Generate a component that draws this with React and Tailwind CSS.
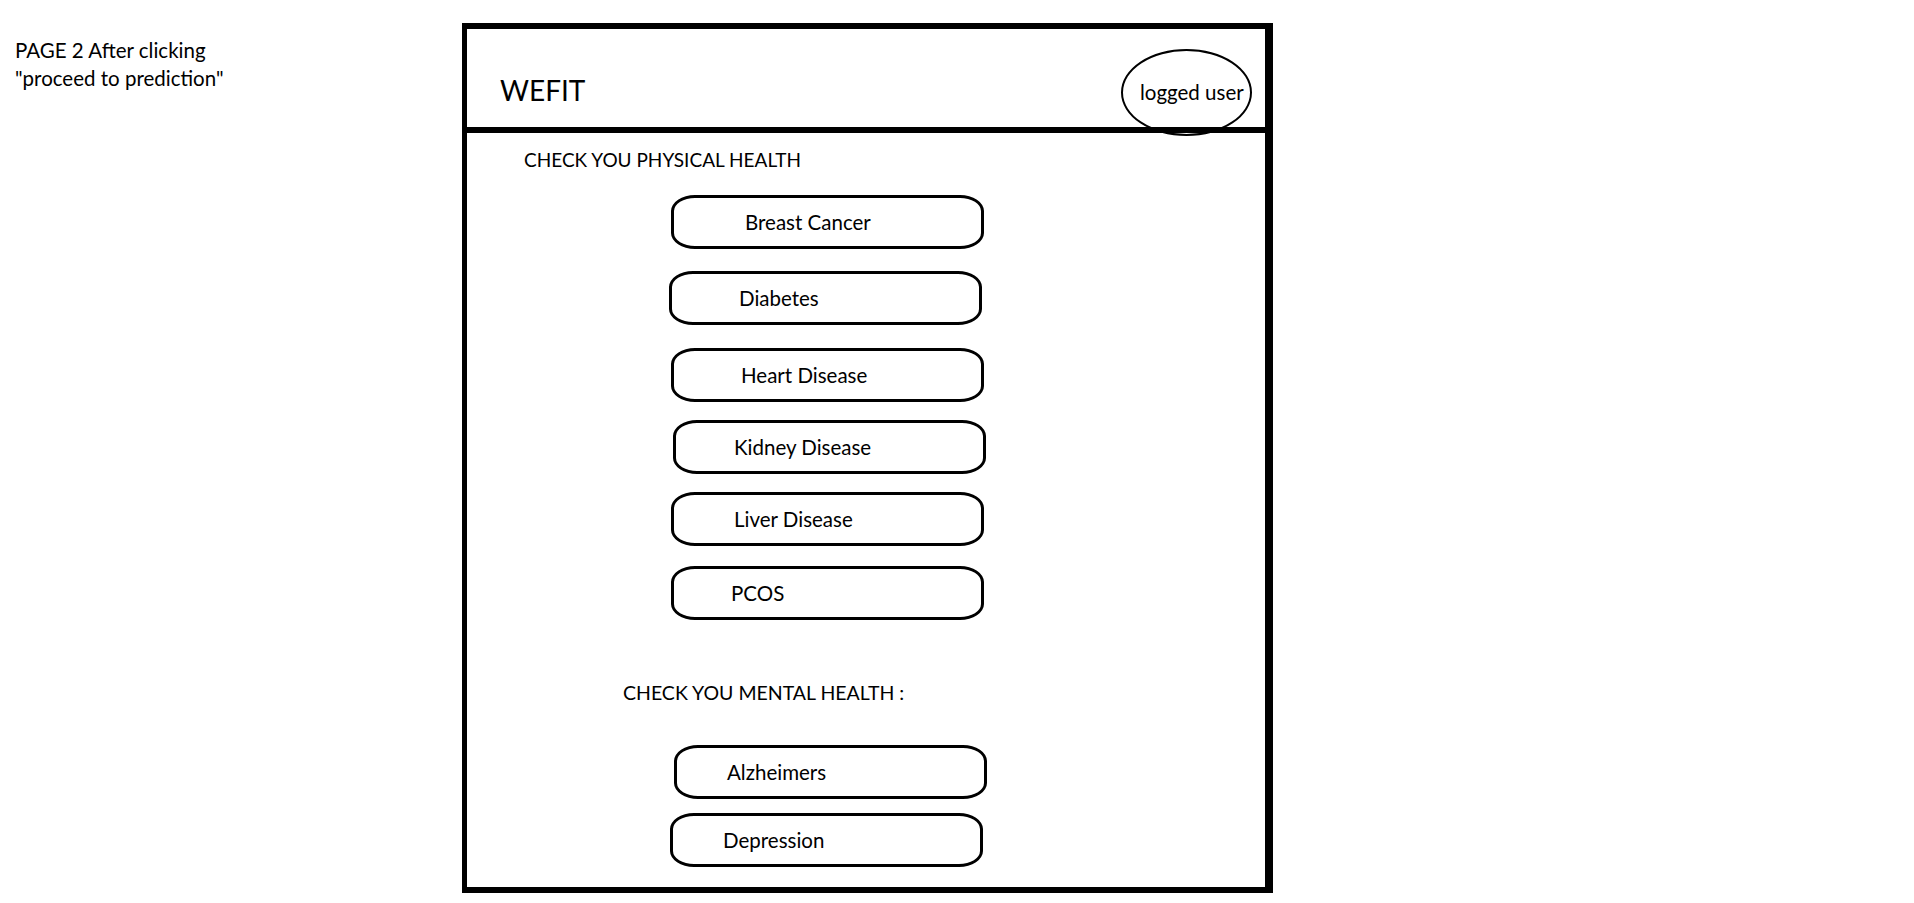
import React from "react";

const physical = [
  { label: "Breast Cancer", mt: "mt-[23px]", ml: "ml-[204px]", pl: "pl-[71px]" },
  { label: "Diabetes", mt: "mt-[22px]", ml: "ml-[202px]", pl: "pl-[67px]" },
  { label: "Heart Disease", mt: "mt-[23px]", ml: "ml-[204px]", pl: "pl-[67px]" },
  { label: "Kidney Disease", mt: "mt-[18px]", ml: "ml-[206px]", pl: "pl-[58px]" },
  { label: "Liver Disease", mt: "mt-[18px]", ml: "ml-[204px]", pl: "pl-[60px]" },
  { label: "PCOS", mt: "mt-[20px]", ml: "ml-[204px]", pl: "pl-[57px]" },
];

const mental = [
  { label: "Alzheimers", mt: "mt-[40px]", ml: "ml-[207px]", pl: "pl-[50px]" },
  { label: "Depression", mt: "mt-[14px]", ml: "ml-[203px]", pl: "pl-[50px]" },
];

function Pill({ item }) {
  return (
    <button
      className={`${item.mt} ${item.ml} ${item.pl} flex h-[54px] w-[313px] items-center border-[3px] border-black rounded-[24px/16px] bg-white text-[20.5px] text-black`}
    >
      {item.label}
    </button>
  );
}

export default function App() {
  return (
    <div className="flex h-[903px] w-[1914px] items-start bg-white font-['Lato',sans-serif] text-black">
      {/* note on the left of the sketch */}
      <div className="w-[462px] shrink-0 pl-[15px] pt-[36px] text-[20.5px] leading-[28px]">
        <p>PAGE 2 After clicking</p>
        <p>"proceed to prediction"</p>
      </div>

      {/* the page frame */}
      <div className="mt-[23px] flex h-[870px] w-[811px] shrink-0 flex-col border-t-[6px] border-r-[8px] border-b-[6px] border-l-[5px] border-black">
        <header className="relative flex h-[104px] shrink-0 items-center border-b-[6px] border-black pl-[33px] pt-[24px]">
          <span className="text-[28px] leading-none">WEFIT</span>
          <div className="absolute left-[654px] top-[20px] flex h-[87px] w-[131px] items-center rounded-[50%] border-[2px] border-black pl-[17px]">
            <span className="text-[20.5px] leading-none whitespace-nowrap">logged user</span>
          </div>
        </header>

        <main className="flex flex-1 flex-col items-start">
          <h2 className="ml-[57px] mt-[15px] text-[19px] leading-[24px]">CHECK YOU PHYSICAL HEALTH</h2>
          {physical.map((item) => (
            <Pill key={item.label} item={item} />
          ))}

          <h2 className="ml-[156px] mt-[61px] text-[19.5px] leading-[24px]">CHECK YOU MENTAL HEALTH :</h2>
          {mental.map((item) => (
            <Pill key={item.label} item={item} />
          ))}
        </main>
      </div>
    </div>
  );
}
